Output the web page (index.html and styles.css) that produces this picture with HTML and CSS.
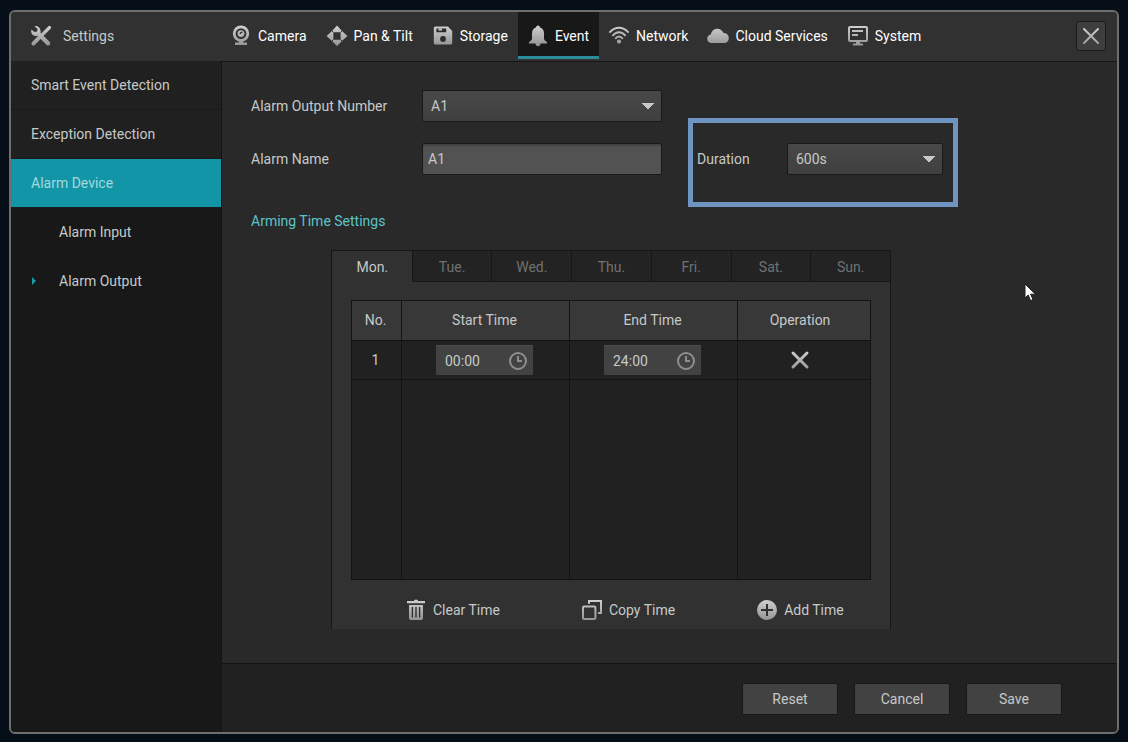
FILE: index.html
```html
<!DOCTYPE html>
<html lang="en">
<head>
    <meta charset="UTF-8">
    <meta name="viewport" content="width=device-width, initial-scale=1.0">
    <title>Settings</title>
    <link rel="stylesheet" href="styles.css">
</head>
<body>
    <svg class="defs" width="0" height="0" aria-hidden="true">
        <defs>
            <linearGradient id="metal" gradientUnits="userSpaceOnUse" x1="0" y1="0" x2="0" y2="22">
                <stop offset="0" stop-color="#d2d2d2"/>
                <stop offset="1" stop-color="#8f9191"/>
            </linearGradient>
        </defs>
    </svg>

    <div class="window">
        <header>
            <div class="brand">
                <svg width="22" height="22" viewBox="0 0 22 22">
                    <path d="M12.4 9.6L19.4 2.6" stroke="url(#metal)" stroke-width="3.4" stroke-linecap="round"/>
                    <path d="M9.4 12.4L3.4 18.6" stroke="url(#metal)" stroke-width="4" stroke-linecap="round"/>
                    <path d="M4.6 1.2L7.6 4L7 6.4L4.6 7L1.4 4.4C0.6 7.4 1.8 10 4.4 10.8C5.8 11.2 6.8 10.9 7.6 10.8L16.6 20C18.6 21.6 21.2 19.2 19.8 17L10.6 8C11 5 9.8 2 7.2 1.2C6.4 0.9 5.4 0.9 4.6 1.2Z" fill="url(#metal)"/>
                </svg>
                <h1>Settings</h1>
            </div>
            <nav>
                <a href="#camera">
                    <svg width="22" height="22" viewBox="0 0 22 22">
                        <circle cx="11" cy="8.6" r="6.8" fill="none" stroke="url(#metal)" stroke-width="2.8"/>
                        <circle cx="11" cy="8.6" r="3.4" fill="url(#metal)"/>
                        <path d="M10.2 9A2 2 0 0 1 12.6 7.2" fill="none" stroke="#333" stroke-width="1.4"/>
                        <path d="M9 15.4H13V17.6H17V20H5V17.6H9Z" fill="url(#metal)"/>
                    </svg>
                    Camera
                </a>
                <a href="#pan-tilt">
                    <svg width="22" height="22" viewBox="0 0 22 22">
                        <path fill-rule="evenodd" d="M11 0.4L16 6L21.4 11L16 16L11 21L6 16L0.6 11L6 6ZM7.4 7.2V14.8H14.6V7.2Z" fill="url(#metal)"/>
                        <path d="M4.6 4.6L7.4 7.4M17.4 4.6L14.6 7.4M4.6 17.4L7.4 14.6M17.4 17.4L14.6 14.6" stroke="#313131" stroke-width="1"/>
                    </svg>
                    Pan &amp; Tilt
                </a>
                <a href="#storage">
                    <svg width="22" height="22" viewBox="0 0 22 22">
                        <path d="M3.4 1.6H16L20.2 6V18Q20.2 19.6 18.6 19.6H3.4Q1.8 19.6 1.8 18V3.2Q1.8 1.6 3.4 1.6Z" fill="url(#metal)"/>
                        <path d="M4.4 3.4H14.2V7.2H4.4Z" fill="#2c2c2c"/>
                        <path d="M6.4 3.4H10V5.4H6.4Z" fill="#c9caca"/>
                        <circle cx="11" cy="14" r="2.9" fill="#2c2c2c"/>
                    </svg>
                    Storage
                </a>
                <a href="#event" class="current">
                    <svg width="22" height="22" viewBox="0 0 22 22">
                        <path d="M11 0.4C12.2 0.4 12.8 1.2 12.8 2.2C15.6 3.2 17 5.4 17 8.4V13.8C17 15 18.4 16 20 17V18.6H13.6C13.4 20.2 12.4 21.2 11 21.2S8.6 20.2 8.4 18.6H2V17C3.6 16 5 15 5 13.8V8.4C5 5.4 6.4 3.2 9.2 2.2C9.2 1.2 9.8 0.4 11 0.4Z" fill="url(#metal)"/>
                    </svg>
                    Event
                </a>
                <a href="#network">
                    <svg width="22" height="22" viewBox="0 0 22 22">
                        <g fill="none" stroke="url(#metal)" stroke-width="2">
                            <path d="M1.4 7.6Q6 2.8 11 2.8T20.6 7.6"/>
                            <path d="M4.4 10.8Q7.6 7.2 11 7.2T17.6 10.8"/>
                            <path d="M7.2 13.8Q9 11.6 11 11.6T14.8 13.8"/>
                        </g>
                        <circle cx="11" cy="16.6" r="2.1" fill="url(#metal)"/>
                    </svg>
                    Network
                </a>
                <a href="#cloud">
                    <svg width="22" height="22" viewBox="0 0 22 22">
                        <path d="M4.6 18C2 18 0.2 16.2 0.2 13.8C0.2 11.6 1.6 10 3.8 9.6C4.4 6 7 3.8 10.4 3.8C13.2 3.8 15.4 5.4 16.4 8C19.4 7.8 21.8 10 21.8 13C21.8 16 19.8 18 17 18Z" fill="url(#metal)"/>
                    </svg>
                    Cloud Services
                </a>
                <a href="#system">
                    <svg width="22" height="22" viewBox="0 0 22 22">
                        <rect x="2" y="2" width="18" height="14" rx="1" fill="none" stroke="url(#metal)" stroke-width="2"/>
                        <path d="M5 5H16V7H5ZM5 9H11V11H5ZM9 17H13V18.6H16V20.4H6V18.6H9Z" fill="url(#metal)"/>
                    </svg>
                    System
                </a>
            </nav>
            <button class="close" aria-label="Close">
                <svg width="18" height="18" viewBox="0 0 18 18">
                    <path d="M2 2L16 16M16 2L2 16" stroke="url(#metal)" stroke-width="2" stroke-linecap="round"/>
                </svg>
            </button>
        </header>

        <div class="body">
            <aside>
                <a href="#smart-event" class="item">Smart Event Detection</a>
                <a href="#exception" class="item">Exception Detection</a>
                <a href="#alarm-device" class="item active">Alarm Device</a>
                <a href="#alarm-input" class="sub">Alarm Input</a>
                <a href="#alarm-output" class="sub selected">Alarm Output</a>
            </aside>

            <div class="content">
                <main>
                    <div class="form">
                        <label for="output-number">Alarm Output Number</label>
                        <select id="output-number">
                            <option>A1</option>
                        </select>
                        <label for="alarm-name" class="first">Alarm Name</label>
                        <input type="text" id="alarm-name" value="A1">
                        <div class="duration">
                            <label for="duration">Duration</label>
                            <select id="duration">
                                <option>600s</option>
                            </select>
                        </div>
                    </div>

                    <h2>Arming Time Settings</h2>

                    <section class="schedule">
                        <div class="days">
                            <button class="day on">Mon.</button>
                            <button class="day">Tue.</button>
                            <button class="day">Wed.</button>
                            <button class="day">Thu.</button>
                            <button class="day">Fri.</button>
                            <button class="day">Sat.</button>
                            <button class="day">Sun.</button>
                        </div>
                        <table>
                            <thead>
                                <tr>
                                    <th class="col-no">No.</th>
                                    <th class="col-time">Start Time</th>
                                    <th class="col-time">End Time</th>
                                    <th>Operation</th>
                                </tr>
                            </thead>
                            <tbody>
                                <tr>
                                    <td>1</td>
                                    <td>
                                        <div class="time">
                                            <input type="text" value="00:00" aria-label="Start Time">
                                            <svg width="20" height="20" viewBox="0 0 20 20" fill="none" stroke="#8d8f8f" stroke-width="2">
                                                <circle cx="10" cy="10" r="8"/>
                                                <path d="M10 5V10H14"/>
                                            </svg>
                                        </div>
                                    </td>
                                    <td>
                                        <div class="time">
                                            <input type="text" value="24:00" aria-label="End Time">
                                            <svg width="20" height="20" viewBox="0 0 20 20" fill="none" stroke="#8d8f8f" stroke-width="2">
                                                <circle cx="10" cy="10" r="8"/>
                                                <path d="M10 5V10H14"/>
                                            </svg>
                                        </div>
                                    </td>
                                    <td>
                                        <button class="remove" aria-label="Delete">
                                            <svg width="20" height="20" viewBox="0 0 20 20">
                                                <path d="M3 3L17 17M17 3L3 17" stroke="url(#metal)" stroke-width="3" stroke-linecap="round"/>
                                            </svg>
                                        </button>
                                    </td>
                                </tr>
                                <tr class="empty">
                                    <td></td>
                                    <td></td>
                                    <td></td>
                                    <td></td>
                                </tr>
                            </tbody>
                        </table>
                        <div class="actions">
                            <button>
                                <svg width="20" height="22" viewBox="0 0 20 22">
                                    <path d="M1 2H8Q8 0.4 10 0.4T12 2H19V4.2H1Z" fill="url(#metal)"/>
                                    <path d="M3 6H17V19Q17 21 15 21H5Q3 21 3 19Z" fill="url(#metal)"/>
                                    <path d="M6.4 8V18.4M10 8V18.4M13.6 8V18.4" stroke="#303030" stroke-width="1.4"/>
                                </svg>
                                Clear Time
                            </button>
                            <button>
                                <svg width="20" height="22" viewBox="0 0 20 22" fill="none" stroke="url(#metal)" stroke-width="2">
                                    <rect x="1" y="7.6" width="12.4" height="12.4" rx="1"/>
                                    <path d="M7 4.8V2H19V14H16"/>
                                </svg>
                                Copy Time
                            </button>
                            <button>
                                <svg width="20" height="22" viewBox="0 0 20 22">
                                    <circle cx="10" cy="11" r="10" fill="url(#metal)"/>
                                    <path d="M10 5V17M4 11H16" stroke="#303030" stroke-width="2"/>
                                </svg>
                                Add Time
                            </button>
                        </div>
                    </section>
                </main>

                <footer>
                    <button>Reset</button>
                    <button>Cancel</button>
                    <button>Save</button>
                </footer>
            </div>
        </div>
    </div>

    <svg class="cursor" width="13" height="19" viewBox="0 0 13 19" aria-hidden="true">
        <path d="M1 1V15L4.2 12L6.6 17.6L9 16.6L6.6 11.2H11.4Z" fill="#fff" stroke="#222"/>
    </svg>
</body>
</html>
```

FILE: styles.css
```css
* {
    box-sizing: border-box;
}
body {
    margin: 0;
    padding: 10px 9px 8px;
    min-height: 100vh;
    display: flex;
    background-color: #060e17;
    color: #c6c9c8;
    font-family: Roboto, "Liberation Sans", sans-serif;
    font-size: 14px;
    line-height: 18px;
}
button, input, select {
    font: inherit;
    color: inherit;
}
button {
    border: none;
    padding: 0;
    background: none;
    cursor: pointer;
}
a {
    color: inherit;
    text-decoration: none;
}
svg {
    flex: none;
}
h1, h2 {
    margin: 0;
    font-size: 14px;
    font-weight: normal;
}
.defs {
    position: absolute;
}
.window {
    flex: 1;
    display: flex;
    flex-direction: column;
    border: 2px solid #6e6e6e;
    border-radius: 6px;
    background-color: #292929;
    overflow: hidden;
}

/* top bar */
header {
    display: flex;
    height: 49px;
    background-color: #313131;
}
.brand {
    width: 210px;
    padding: 0 0 2px 19px;
    display: flex;
    align-items: center;
    gap: 11px;
}
nav {
    display: flex;
}
nav a {
    display: flex;
    align-items: center;
    gap: 6px;
    padding: 4px 10px 0 9px;
    border-bottom: 3px solid transparent;
    height: 47px;
    color: #fff;
    white-space: nowrap;
}
nav .current {
    background-color: #181818;
    border-bottom-color: #2a8c98;
}
.close {
    width: 30px;
    height: 30px;
    margin: 9px 11px 0 auto;
    display: flex;
    align-items: center;
    justify-content: center;
    background-color: #3e3e3e;
    border: 1px solid #1a1a1a;
    border-radius: 2px;
}

.body {
    flex: 1;
    display: flex;
}
aside {
    width: 210px;
    background-color: #181818;
}
aside a {
    display: block;
    height: 49px;
    padding: 15px 20px;
    border-bottom: 1px solid transparent;
}
aside .item {
    background-color: #202020;
    border-bottom-color: #1a1a1a;
}
aside .active {
    background-color: #1295a6;
    color: #a5d8dd;
}
aside .sub {
    padding-left: 48px;
}
aside .selected {
    padding-left: 21px;
    display: flex;
    align-items: center;
    gap: 23px;
}
.selected::before {
    content: "";
    border-left: 4px solid #1d98a6;
    border-top: 4px solid transparent;
    border-bottom: 4px solid transparent;
}
.content {
    flex: 1;
    display: flex;
    flex-direction: column;
    border-left: 1px solid #141414;
    border-top: 1px solid #141414;
}
main {
    flex: 1;
    padding: 28px 29px;
}

/* form */
.form {
    display: grid;
    grid-template-columns: 171px 240px auto;
    justify-content: start;
    align-items: center;
    row-gap: 21px;
}
.form .first {
    grid-column: 1;
}
select, #alarm-name {
    width: 100%;
    height: 32px;
    border: 1px solid #191919;
    border-radius: 2px;
    outline: none;
}
select {
    appearance: none;
    padding: 0 8px;
    background-color: #434343;
    background-image: linear-gradient(to bottom right, #c3cac8 50%, transparent 50%), linear-gradient(to bottom left, #c3cac8 50%, transparent 50%), linear-gradient(#484848, #404040);
    background-position: right 7px center, right 13px center, 0 0;
    background-size: 6px 7px, 6px 7px, 100% 100%;
    background-repeat: no-repeat;
}
#alarm-name {
    padding: 0 5px;
    background-color: #525252;
    box-shadow: inset 0 2px 1px #424242;
}
.duration {
    position: relative;
    display: flex;
    align-items: center;
    margin-left: 35px;
}
.duration label {
    width: 90px;
}
.duration select {
    width: 156px;
}
.duration::after {
    content: "";
    position: absolute;
    inset: -25px -15px -32px -9px;
    border: 5px solid #6f94c1;
    pointer-events: none;
}
h2 {
    margin-top: 37px;
    color: #5cc3c9;
}

/* weekly schedule */
.schedule {
    width: 560px;
    margin: 20px 0 0 80px;
    border: 1px solid #161616;
    border-bottom: none;
    background-color: #313131;
}
.days {
    display: flex;
}
.day {
    flex: 1;
    height: 31px;
    padding-top: 2px;
    background-color: #232323;
    border-left: 1px solid #161616;
    border-bottom: 1px solid #161616;
    color: #707272;
}
.day.on {
    background: none;
    border-color: transparent;
    color: #c6c9c8;
}
table {
    width: 520px;
    margin: 18px 19px 0;
    table-layout: fixed;
    border-collapse: collapse;
    text-align: center;
    background-color: #212121;
}
th, td {
    border: 1px solid #131313;
    padding: 0 2px 0 0;
    height: 39px;
    font-weight: normal;
}
th {
    height: 40px;
    padding-bottom: 2px;
    background-color: #383838;
}
th:last-child, td:last-child {
    padding-right: 8px;
}
.col-no {
    width: 50px;
}
.col-time {
    width: 168px;
}
.empty td {
    height: 200px;
}
.time {
    width: 97px;
    height: 30px;
    margin: 0 auto;
    padding: 0 5px 0 9px;
    display: flex;
    align-items: center;
    justify-content: space-between;
    background-color: #424242;
    border-top: 1px solid #4c4c4c;
}
.time input {
    width: 50px;
    padding: 0;
    border: none;
    outline: none;
    background: none;
}
.remove {
    display: block;
    height: 20px;
    margin: 0 auto;
}
.actions {
    display: flex;
    gap: 82px;
    height: 49px;
    padding: 12px 0 0 74px;
    align-items: flex-start;
}
.actions button {
    display: flex;
    align-items: center;
    gap: 7px;
    height: 36px;
}

footer {
    height: 69px;
    padding: 2px 55px 0;
    display: flex;
    align-items: center;
    justify-content: flex-end;
    gap: 16px;
    background-color: #212121;
    border-top: 1px solid #141414;
}
footer button {
    width: 96px;
    height: 32px;
    background-color: #424242;
    border: 1px solid #181818;
    border-radius: 2px;
}

.cursor {
    position: absolute;
    left: 1024px;
    top: 283px;
}
```
